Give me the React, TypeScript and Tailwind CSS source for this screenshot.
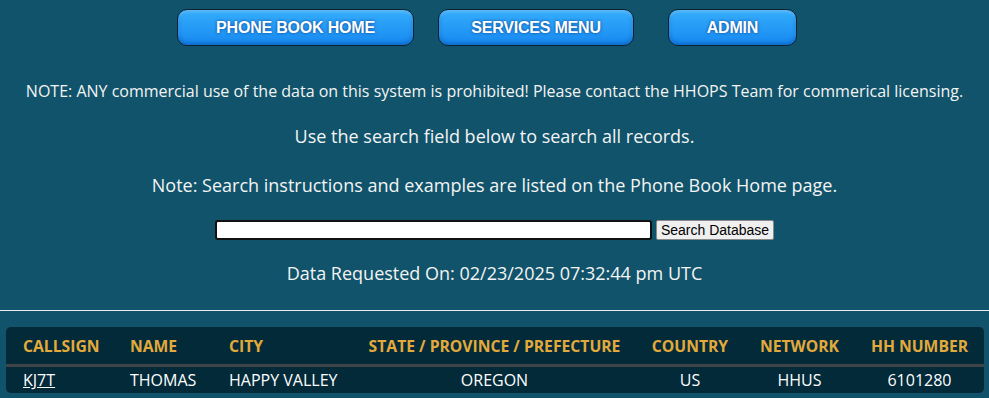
import React from 'react'

const NAV = [
  { label: 'PHONE BOOK HOME', w: 'w-[237px]', m: 'mr-[24px]' },
  { label: 'SERVICES MENU', w: 'w-[196px]', m: 'mr-[34px]' },
  { label: 'ADMIN', w: 'w-[129px]', m: 'mr-[15px]' },
]

const COLS = [
  { label: 'CALLSIGN', w: 'w-[107px]', cell: 'text-left pl-[17px] pr-[6px]' },
  { label: 'NAME', w: 'w-[100px]', cell: 'text-left pl-[17px] pr-[6px]' },
  { label: 'CITY', w: 'w-[140px]', cell: 'text-left pl-[16px] pr-[6px]' },
  { label: 'STATE / PROVINCE / PREFECTURE', w: 'w-[283px]', cell: 'text-center px-[10px]' },
  { label: 'COUNTRY', w: 'w-[108px]', cell: 'text-center px-[10px]' },
  { label: 'NETWORK', w: 'w-[111px]', cell: 'text-center px-[10px]' },
  { label: 'HH NUMBER', w: 'w-[129px]', cell: 'text-center px-[10px]' },
]

const ROWS = [
  ['KJ7T', 'THOMAS', 'HAPPY VALLEY', 'OREGON', 'US', 'HHUS', '6101280'],
]

export default function App() {
  return (
    <div className="min-h-screen bg-[#10536a] text-[#f4f4f4] font-['Open_Sans',sans-serif] overflow-hidden">
      {/* Top nav */}
      <nav className="flex justify-center pt-[9px]">
        {NAV.map(n => (
          <button
            key={n.label}
            className={`${n.w} ${n.m} h-[37px] rounded-[10px] border border-[#0b2233] bg-gradient-to-b from-[#34adfb] to-[#1689f1] shadow-[inset_0_-2px_4px_rgba(0,60,140,0.45),inset_0_2px_3px_rgba(255,255,255,0.25)] font-['Liberation_Sans',Arial,sans-serif] font-bold text-[16px] tracking-[-0.2px] text-white [text-shadow:0_0_3px_rgba(0,40,110,0.8)]`}
          >
            {n.label}
          </button>
        ))}
      </nav>

      <p className="mt-[34px] text-center text-[16px] leading-[22px] whitespace-nowrap">
        NOTE: ANY commercial use of the data on this system is prohibited! Please contact the HHOPS Team for commerical licensing.
      </p>
      <p className="mt-[22px] text-center text-[18px] leading-[24px]">
        Use the search field below to search all records.
      </p>
      <p className="mt-[25px] text-center text-[18px] leading-[24px]">
        Note: Search instructions and examples are listed on the Phone Book Home page.
      </p>

      {/* Search */}
      <form className="mt-[23px] flex justify-center items-center gap-[4px]" onSubmit={e => e.preventDefault()}>
        <input
          type="text"
          className="w-[437px] h-[20px] bg-white border-2 border-[#111] rounded-[3px] text-black text-[13px] px-1 outline-none"
        />
        <button
          type="submit"
          className="h-[20px] px-[4px] bg-[#efefef] border border-[#8a8a8a] rounded-[2px] text-black text-[14px] leading-[16px] font-['Liberation_Sans',Arial,sans-serif]"
        >
          Search Database
        </button>
      </form>

      <p className="mt-[21px] text-center text-[18px] leading-[24px]">
        Data Requested On: 02/23/2025 07:32:44 pm UTC
      </p>

      <hr className="mt-[25px] border-0 border-t border-[#e8eef2]" />

      {/* Results */}
      <div className="mt-[16px] ml-[6px] mr-[5px] rounded-[5px] bg-[#022a39] overflow-hidden">
        <table className="w-full border-collapse table-fixed">
          <thead>
            <tr className="border-b-[3px] border-[#3e4447]">
              {COLS.map(c => (
                <th
                  key={c.label}
                  className={`${c.w} ${c.cell} h-[38px] pt-[3px] font-bold text-[15.7px] text-[#e3aa3b] whitespace-nowrap`}
                >
                  {c.label}
                </th>
              ))}
            </tr>
          </thead>
          <tbody>
            {ROWS.map(r => (
              <tr key={r[0]}>
                {r.map((cell, i) => (
                  <td
                    key={i}
                    className={`${COLS[i].cell} h-[28px] text-[16px] text-white whitespace-nowrap`}
                  >
                    {i === 0 ? <a href="#" className="underline">{cell}</a> : cell}
                  </td>
                ))}
              </tr>
            ))}
          </tbody>
        </table>
      </div>
    </div>
  )
}
